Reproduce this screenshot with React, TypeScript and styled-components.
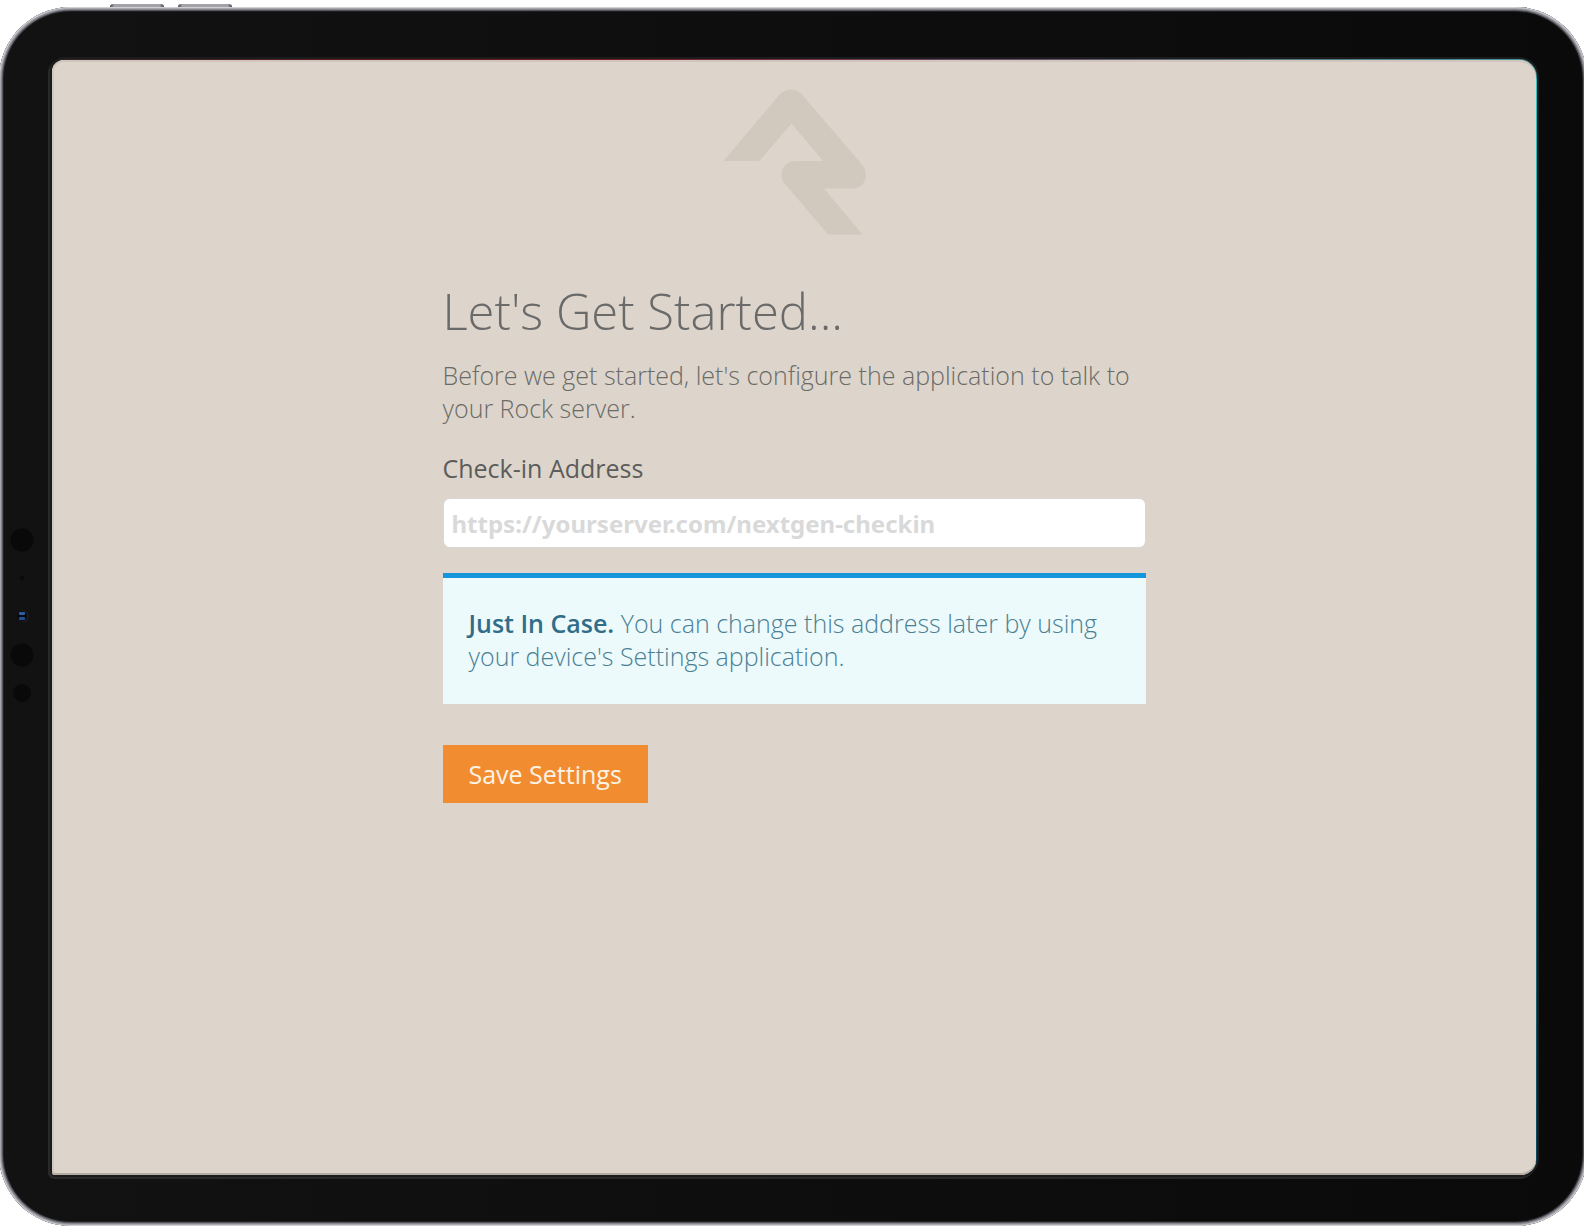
import React from "react";
import styled, { createGlobalStyle } from "styled-components";

const GlobalStyle = createGlobalStyle`
  *, *::before, *::after { box-sizing: border-box; }
  body {
    margin: 0;
    background: #ffffff;
    font-family: "Open Sans", "Noto Sans", sans-serif;
  }
`;

const Page = styled.div`
  display: flex;
  flex-direction: column;
  min-height: 100vh;
  padding: 4px 0 6px;
  overflow: hidden;
`;

const HardwareKeys = styled.div`
  display: flex;
  gap: 14px;
  height: 3px;
  padding-left: 110px;
`;

const HardwareKey = styled.span`
  width: 54px;
  border-radius: 3px 3px 0 0;
  background: linear-gradient(90deg, #44454a, #a2a3a8 8%, #a2a3a8 92%, #44454a);
`;

const Device = styled.div`
  flex: 1;
  display: flex;
  margin: 0 -3px 0 -1px;
  padding: 52px 50px 51px 0;
  border-radius: 72px;
  background: linear-gradient(90deg, #121212, #0a0a0a);
  box-shadow:
    inset 0 0 0 1px #d0d0d4,
    inset 0 0 0 2px #a6a7ac,
    inset 0 0 0 3px #85868d,
    inset 0 0 0 4px #55575d,
    inset 0 0 0 5px #202022;
`;

const SensorStrip = styled.div`
  flex: none;
  display: flex;
  align-items: center;
  justify-content: center;
  width: 53px;
  padding: 0 7px 5px 0;
`;

const ScreenEdge = styled.div`
  flex: 1;
  display: flex;
  padding: 1px 1px 0 0;
  border-radius: 12px 18px 16px 4px;
  background:
    linear-gradient(90deg, #2a2626, #6a1820 25%, #7a1c2a 40%, #6b4560 60%, #3f9a9c) top / 100% 20px no-repeat,
    linear-gradient(180deg, #35c4c6, #1d8f9a 50%, #0d4560);
  box-shadow: 0 0 0 2px #1c1c1c, -2px 2px 0 2px #292929;
`;

const Screen = styled.main`
  flex: 1;
  display: flex;
  flex-direction: column;
  align-items: center;
  padding: 29px 24px;
  border-radius: 12px 17px 15px 3px;
  background: #ddd5cb;
  box-shadow: inset 0 2px 0 #d0c4bd, inset 0 -2px 0 #b5aca2, inset 2px 0 0 #d2c9be;
`;

const Content = styled.form`
  display: flex;
  flex-direction: column;
  align-items: flex-start;
  width: 100%;
  max-width: 703px;
  margin-top: 43px;
`;

const Title = styled.h1`
  margin: 0;
  font-size: 49px;
  line-height: 64px;
  font-weight: 300;
  color: #6a6a6a;
`;

const Intro = styled.p`
  margin: 16px 0 0;
  font-size: 25px;
  line-height: 33px;
  font-weight: 300;
  color: #6b6b68;
`;

const Label = styled.label`
  margin-top: 27px;
  font-size: 25px;
  line-height: 33px;
  font-weight: 400;
  color: #5c5c5b;
`;

const AddressInput = styled.input`
  width: 100%;
  height: 50px;
  margin-top: 13px;
  padding: 0 8px;
  border: 1px solid #d9d7d5;
  border-radius: 7px;
  background: #ffffff;
  font-family: "Noto Sans", sans-serif;
  font-size: 24px;
  font-weight: 700;
  color: #555555;
  &::placeholder { color: #d9d9d9; opacity: 1; }
`;

const Notice = styled.p`
  width: 100%;
  margin: 25px 0 0;
  padding: 29px 26px 31px;
  border-top: 5px solid #1495dc;
  background: #ecfafc;
  font-size: 25px;
  line-height: 33px;
  font-weight: 300;
  color: #4b8093;
`;

const NoticeLead = styled.strong`
  font-weight: 600;
  color: #316d88;
`;

const SaveButton = styled.button`
  height: 58px;
  margin-top: 41px;
  padding: 0 26px;
  border: 0;
  background: #f28c30;
  font-family: inherit;
  font-size: 25px;
  font-weight: 400;
  color: #fdf3e4;
`;

function Sensors() {
  return (
    <svg width="24" height="174" viewBox="0 0 24 174" aria-hidden="true">
      <circle cx="12" cy="12" r="11.5" fill="#090909" />
      <circle cx="12" cy="50" r="2.5" fill="#0b0b0b" />
      <circle cx="13" cy="88" r="6" fill="#1c1c1e" />
      <circle cx="12" cy="88" r="5" fill="#080a12" />
      <rect x="9" y="84" width="6" height="3" rx="1" fill="#2c5f9e" />
      <rect x="9" y="89" width="6" height="3" rx="1" fill="#244f8c" />
      <circle cx="12" cy="127" r="11.5" fill="#090909" />
      <circle cx="12" cy="165" r="9" fill="#090909" />
    </svg>
  );
}

function RockLogo() {
  return (
    <svg width="144" height="147" viewBox="22 18 144 147" aria-hidden="true">
      <path
        fill="#d1c9be"
        d="M23.5 90 L80.5 22.5 Q91 14.500 101 22.500 L162.500 94 C169.500 103.500 165 117.500 153 117.500 L124 117.500 L162.500 163.500 L128 163.500 L85 113 C77 103 84 90 95 90 L123 90 L91.500 52.500 L59.500 90 Z"
      />
    </svg>
  );
}

export default function App() {
  return (
    <>
      <GlobalStyle />
      <Page>
        <HardwareKeys>
          <HardwareKey />
          <HardwareKey />
        </HardwareKeys>
        <Device>
          <SensorStrip>
            <Sensors />
          </SensorStrip>
          <ScreenEdge>
            <Screen>
              <RockLogo />
              <Content onSubmit={(event) => event.preventDefault()}>
                <Title>Let's Get Started...</Title>
                <Intro>
                  Before we get started, let's configure the application to talk to your Rock server.
                </Intro>
                <Label htmlFor="address">Check-in Address</Label>
                <AddressInput
                  id="address"
                  type="url"
                  placeholder="https://yourserver.com/nextgen-checkin"
                />
                <Notice>
                  <NoticeLead>Just In Case.</NoticeLead> You can change this address later by using
                  your device's Settings application.
                </Notice>
                <SaveButton type="submit">Save Settings</SaveButton>
              </Content>
            </Screen>
          </ScreenEdge>
        </Device>
      </Page>
    </>
  );
}
